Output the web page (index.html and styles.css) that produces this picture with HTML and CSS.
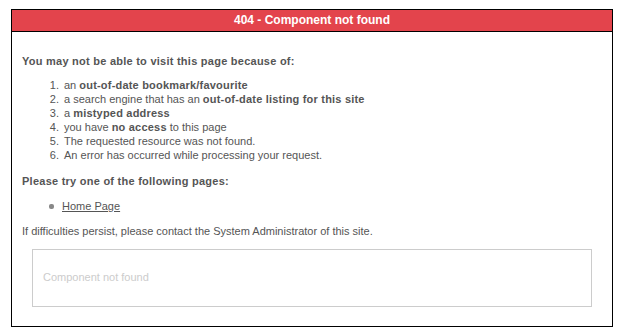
FILE: index.html
```html
<!DOCTYPE html>
<html lang="en">
<head>
    <meta charset="UTF-8">
    <title>404 - Component not found</title>
    <link rel="stylesheet" href="styles.css">
</head>
<body>
    <div class="error-box">
        <div class="error-title">404 - Component not found</div>
        <div class="error-body">
            <p class="lead">You may not be able to visit this page because of:</p>
            <ol class="reasons">
                <li>an <b>out-of-date bookmark/favourite</b></li>
                <li>a search engine that has an <b>out-of-date listing for this site</b></li>
                <li>a <b>mistyped address</b></li>
                <li>you have <b>no access</b> to this page</li>
                <li>The requested resource was not found.</li>
                <li>An error has occurred while processing your request.</li>
            </ol>
            <p class="lead try">Please try one of the following pages:</p>
            <ul class="pages">
                <li><a href="#">Home Page</a></li>
            </ul>
            <p class="contact">If difficulties persist, please contact the System Administrator of this site.</p>
            <div class="techinfo">
                <p>Component not found</p>
            </div>
        </div>
    </div>
</body>
</html>
```

FILE: styles.css
```css
body {
    margin: 9px 0 0 11px;
    font-family: "Liberation Sans", Arial, sans-serif;
    font-size: 11px;
    line-height: 14px;
    color: #555;
    background-color: #fff;
}
b {
    letter-spacing: 0.2px;
}
.error-box {
    width: 600px;
    height: 316px;
    border: 1px solid #000;
}
.error-title {
    height: 21px;
    line-height: 21px;
    background-color: #e3444c;
    border-bottom: 1px solid #000;
    color: #fff;
    font-size: 12px;
    font-weight: bold;
    text-align: center;
}
.error-body {
    padding: 22px 10px 0 10px;
}
.error-body p {
    margin: 0;
}
.lead {
    font-weight: bold;
    letter-spacing: 0.25px;
}
.reasons {
    margin: 10px 0 0 0;
    padding-left: 40px;
}
.reasons li {
    padding-left: 2px;
}
.try {
    margin-top: 12px !important;
}
.pages {
    margin: 11px 0 0 0;
    padding-left: 40px;
    list-style: none;
}
.pages li {
    position: relative;
}
.pages li::before {
    content: "";
    position: absolute;
    left: -13px;
    top: 5px;
    width: 5px;
    height: 5px;
    border-radius: 2px;
    background-color: #888;
}
.pages a {
    color: #555;
    text-decoration: underline;
}
.contact {
    margin-top: 11px !important;
}
.techinfo {
    margin: 11px 10px 0 10px;
    height: 56px;
    border: 1px solid #ccc;
    padding: 0 10px;
    color: #ccc;
}
.techinfo p {
    padding-top: 20px;
}
```
